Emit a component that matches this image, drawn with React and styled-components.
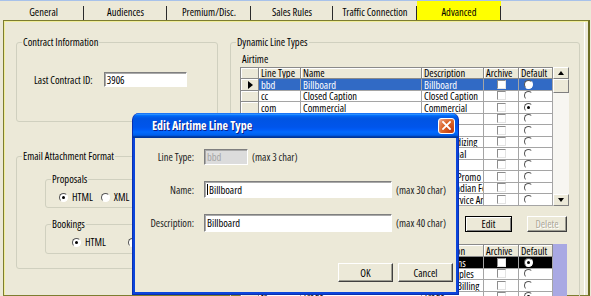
import React from "react"
import styled, { createGlobalStyle } from "styled-components"

const GlobalStyle = createGlobalStyle`
  html, body { margin: 0; padding: 0; background: #ece9d8; }
  body {
    font-family: "Open Sans", "Liberation Sans", Arial, sans-serif;
    font-stretch: 75%;
    font-size: 10.5px;
    color: #000;
  }
  * { box-sizing: border-box; }
`

const tabs = [
  { label: "General", w: 81 },
  { label: "Audiences", w: 83 },
  { label: "Premium/Disc.", w: 84 },
  { label: "Sales Rules", w: 82 },
  { label: "Traffic Connection", w: 84 },
  { label: "Advanced", w: 84, active: true },
]

const airtimeRows = [
  { code: "bbd", name: "Billboard", desc: "Billboard" },
  { code: "cc", name: "Closed Caption", desc: "Closed Caption" },
  { code: "com", name: "Commercial", desc: "Commercial", def: true },
  { code: "dir", name: "Direct Response", desc: "Direct" },
  { code: "fil", name: "Filler", desc: "Filler" },
  { code: "mer", name: "Merchandizing", desc: "Merchandizing" },
  { code: "edu", name: "Educational", desc: "Educational" },
  { code: "oth", name: "Other", desc: "Other" },
  { code: "pro", name: "Network Promo", desc: "Network Promo" },
  { code: "ncf", name: "Non-Canadian Feed", desc: "Non-Canadian Feed" },
  { code: "psa", name: "Public Service Announcement", desc: "Public Service Announcement" },
]

const otherRows = [
  { code: "prm", name: "Promotions", desc: "Promotions", def: true },
  { code: "tap", name: "Tape Samples", desc: "Tape Samples" },
  { code: "nb", name: "Network Billing", desc: "Network Billing" },
  { code: "tr", name: "Trade", desc: "Trade", def: true },
]

// little classic controls
const CheckBox = () => <Check />
const Radio = ({ checked }) => <RadioDot>{checked && <Dot />}</RadioDot>

const Grid = ({ rows, selected, header = "Description" }) => (
  <Table>
    <colgroup>
      <col style={{ width: 18 }} />
      <col style={{ width: 42 }} />
      <col style={{ width: 121 }} />
      <col style={{ width: 62 }} />
      <col style={{ width: 35 }} />
      <col style={{ width: 34 }} />
    </colgroup>
    <thead>
      <Row $h={selected === "black" ? 12 : 11}>
        <Th />
        <Th>Line Type</Th>
        <Th>Name</Th>
        <Th>{header}</Th>
        <Th>Archive</Th>
        <Th>Default</Th>
      </Row>
    </thead>
    <tbody>
      {rows.map((r, i) => {
        const sel = i === 0 && selected
        return (
          // rows alternate 12/11px so the grid keeps its ~11.6px pitch
          <Row key={r.code} $h={i % 2 === 0 ? 12 : 11}>
            <Indicator>{sel === "blue" && <Pointer />}</Indicator>
            <Td $sel={sel}>{r.code}</Td>
            <Td $sel={sel}>{r.name}</Td>
            <Td $sel={sel}>{r.desc}</Td>
            <Td $sel={sel} $center><CheckBox /></Td>
            <Td $sel={sel} $radio><Radio checked={r.def || sel === "black"} /></Td>
          </Row>
        )
      })}
    </tbody>
  </Table>
)

const App = () => {
  return (
    <>
      <GlobalStyle />
      <Screen>
        <TabStrip>
          {tabs.map((t) => (
            <Tab key={t.label} $w={t.w} $active={t.active}>{t.label}</Tab>
          ))}
        </TabStrip>

        <TabPage>
          <LeftColumn>
            <GroupBox $h={86}>
              <legend>Contract Information</legend>
              <ContractRow>
                <span>Last Contract ID:</span>
                <TextBox $w={83} $h={15}>3906</TextBox>
              </ContractRow>
            </GroupBox>

            <GroupBox $h={119} $mt={28}>
              <legend>Email Attachment Format</legend>
              <EmailInner>
                <GroupBox $h={35} $w={150}>
                  <legend>Proposals</legend>
                  <RadioRow $pl={13} $gap={8}>
                    <Option><Radio checked />HTML</Option>
                    <Option><Radio />XML</Option>
                  </RadioRow>
                </GroupBox>
                <GroupBox $h={36} $w={150} $mt={10}>
                  <legend>Bookings</legend>
                  <RadioRow $pl={26} $gap={22}>
                    <Option><Radio checked />HTML</Option>
                    <Option><Radio />XML</Option>
                  </RadioRow>
                </GroupBox>
              </EmailInner>
            </GroupBox>
          </LeftColumn>

          <GroupBox $h={280} $w={350}>
            <legend>Dynamic Line Types</legend>
            <DynInner>
              <Caption>Airtime</Caption>
              <GridWrap>
                <Grid rows={airtimeRows} selected="blue" />
                <ScrollBar>
                  <ScrollButton><ArrowUp /></ScrollButton>
                  <Thumb />
                  <Track />
                  <ScrollButton><ArrowDown /></ScrollButton>
                </ScrollBar>
              </GridWrap>
              <ButtonRow>
                <WinButton $w={47} $h={16} $default>Edit</WinButton>
                <WinButton $w={40} $h={16} $disabled>Delete</WinButton>
              </ButtonRow>
              <GridWrap $mt={12}>
                <Grid rows={otherRows} selected="black" />
                <Lavender />
              </GridWrap>
            </DynInner>
          </GroupBox>
        </TabPage>

        <Dialog>
          <TitleBar>
            <span>Edit Airtime Line Type</span>
            <CloseBox>
              <svg width="9" height="9" viewBox="0 0 9 9">
                <path d="M1 1 L8 8 M8 1 L1 8" stroke="#fff" strokeWidth="1.8" strokeLinecap="square" />
              </svg>
            </CloseBox>
          </TitleBar>
          <DialogBody>
            <Fields>
              <FieldRow $h={16}>
                <FieldLabel>Line Type:</FieldLabel>
                <TextBox $w={44} $disabled>bbd</TextBox>
                <Hint>(max 3 char)</Hint>
              </FieldRow>
              <FieldRow $h={17}>
                <FieldLabel>Name:</FieldLabel>
                <TextBox $w={188}><Caret />Billboard</TextBox>
                <Hint>(max 30 char)</Hint>
              </FieldRow>
              <FieldRow $h={18}>
                <FieldLabel>Description:</FieldLabel>
                <TextBox $w={188}>Billboard</TextBox>
                <Hint>(max 40 char)</Hint>
              </FieldRow>
            </Fields>
            <DialogButtons>
              <WinButton $w={55} $h={19}>OK</WinButton>
              <WinButton $w={55} $h={19}>Cancel</WinButton>
            </DialogButtons>
          </DialogBody>
        </Dialog>
      </Screen>
    </>
  )
}

// styles

const Screen = styled.div`
  position: relative;
  width: 591px;
  height: 296px;
  overflow: hidden;
  background: #ece9d8;
  white-space: nowrap;
`

const TabStrip = styled.div`
  display: flex;
  height: 20px;
  padding-left: 3px;
  border-top: 1px solid #a8c2ea;
`

const Tab = styled.div`
  position: relative;
  width: ${(p) => p.$w}px;
  height: 19px;
  display: flex;
  align-items: center;
  justify-content: center;
  padding-top: 2px;
  background: ${(p) => (p.$active ? "#ffff00" : "transparent")};
  &::after {
    content: "";
    position: absolute;
    right: 0;
    top: 5px;
    bottom: 0;
    width: 1px;
    background: #2a2a2a;
  }
`

const TabPage = styled.div`
  margin-left: 3px;
  width: 587px;
  height: 276px;
  border: 1px solid #7d7d30;
  border-right: 2px solid #6c6c22;
  box-shadow: inset 1px 1px 0 #f1ee9a, inset -3px 0 0 #ece9d8, inset -4px 0 0 #fff;
  display: grid;
  grid-template-columns: 202px 350px;
  column-gap: 12px;
  align-items: start;
  padding: 15px 0 0 12px;
`

const LeftColumn = styled.div`
  display: flex;
  flex-direction: column;
`

const GroupBox = styled.fieldset`
  margin: ${(p) => p.$mt || 0}px 0 0 0;
  padding: 0;
  min-width: 0;
  width: ${(p) => (p.$w ? `${p.$w}px` : "auto")};
  height: ${(p) => p.$h}px;
  border: 1px solid #d0d0bf;
  border-radius: 3px;
  legend {
    margin-left: 5px;
    padding: 0 1px;
    line-height: 13px;
  }
`

const ContractRow = styled.div`
  display: flex;
  align-items: center;
  gap: 11px;
  padding: 23px 0 0 17px;
`

const EmailInner = styled.div`
  padding: 10px 0 0 28px;
`

const RadioRow = styled.div`
  display: flex;
  align-items: center;
  gap: ${(p) => p.$gap}px;
  padding: 4px 0 0 ${(p) => p.$pl}px;
`

const Option = styled.label`
  display: flex;
  align-items: center;
  gap: 4px;
`

const DynInner = styled.div`
  padding: 4px 0 0 9px;
`

const Caption = styled.div`
  margin-left: 2px;
  line-height: 13px;
`

const GridWrap = styled.div`
  display: flex;
  align-items: stretch;
  margin-top: ${(p) => p.$mt || 1}px;
`

const Table = styled.table`
  width: 312px;
  table-layout: fixed;
  border-collapse: collapse;
  border: 1px solid #7a7a7a;
  background: #fff;
`

const Row = styled.tr`
  height: ${(p) => p.$h}px;
`

const Th = styled.th`
  padding: 0 2px;
  background: #ece9d8;
  border: 1px solid #8a8a8a;
  box-shadow: inset 1px 1px 0 #fff;
  font-weight: normal;
  text-align: left;
  line-height: 10px;
  overflow: hidden;
`

const Td = styled.td`
  padding: 0 2px;
  border: 1px solid #a5a5a5;
  line-height: 10px;
  overflow: hidden;
  text-align: ${(p) => (p.$center ? "center" : "left")};
  padding-left: ${(p) => (p.$radio ? 5 : 2)}px;
  background: ${(p) => (p.$sel === "blue" ? "#316ac5" : p.$sel === "black" ? "#000" : "#fff")};
  color: ${(p) => (p.$sel ? "#fff" : "#000")};
`

const Indicator = styled.td`
  padding: 0 0 0 7px;
  background: #ece9d8;
  border: 1px solid #8a8a8a;
  box-shadow: inset 1px 1px 0 #fff;
  line-height: 8px;
`

const Pointer = styled.span`
  display: inline-block;
  width: 0;
  height: 0;
  border-left: 5px solid #000;
  border-top: 4px solid transparent;
  border-bottom: 4px solid transparent;
  vertical-align: middle;
`

const Check = styled.span`
  display: inline-block;
  width: 9px;
  height: 9px;
  background: #fff;
  border: 1px solid;
  border-color: #8d8d8d #e4e4e4 #e4e4e4 #8d8d8d;
  vertical-align: top;
`

const RadioDot = styled.span`
  display: inline-flex;
  align-items: center;
  justify-content: center;
  width: 9px;
  height: 9px;
  border-radius: 50%;
  background: #fff;
  border: 1px solid;
  border-color: #555 #fff #fff #555;
  vertical-align: top;
  flex-shrink: 0;
`

const Dot = styled.span`
  width: 3px;
  height: 3px;
  border-radius: 50%;
  background: #000;
`

const ScrollBar = styled.div`
  width: 16px;
  display: flex;
  flex-direction: column;
  background: #f7f6f1;
`

const ScrollButton = styled.div`
  height: 12px;
  display: flex;
  align-items: center;
  justify-content: center;
  background: #ece9d8;
  border: 1px solid;
  border-color: #fff #7f7f7f #7f7f7f #fff;
`

const ArrowUp = styled.span`
  width: 0;
  height: 0;
  border-left: 3.5px solid transparent;
  border-right: 3.5px solid transparent;
  border-bottom: 4px solid #000;
`

const ArrowDown = styled(ArrowUp)`
  border-bottom: none;
  border-top: 4px solid #000;
`

const Thumb = styled(ScrollButton)`
  height: 14px;
`

const Track = styled.div`
  flex: 1;
`

const Lavender = styled.div`
  width: 14px;
  background: #a9a9e3;
`

const ButtonRow = styled.div`
  display: flex;
  justify-content: flex-end;
  gap: 15px;
  width: 328px;
  padding-right: 1px;
  margin-top: 10px;
`

const WinButton = styled.button`
  width: ${(p) => p.$w}px;
  height: ${(p) => p.$h}px;
  padding: 0;
  font: inherit;
  background: #ece9d8;
  color: ${(p) => (p.$disabled ? "#aca899" : "#000")};
  text-shadow: ${(p) => (p.$disabled ? "1px 1px 0 #fff" : "none")};
  border: 1px solid;
  border-color: ${(p) => (p.$default ? "#000" : "#fff #404040 #404040 #fff")};
  box-shadow: ${(p) =>
    p.$default
      ? "inset 1px 1px 0 #fff, inset -1px -1px 0 #808080"
      : "inset -1px -1px 0 #9d9d92"};
`

const TextBox = styled.div`
  display: flex;
  align-items: center;
  width: ${(p) => p.$w}px;
  height: ${(p) => (p.$h ? `${p.$h}px` : "100%")};
  padding-left: 2px;
  background: ${(p) => (p.$disabled ? "#dcdcdc" : "#fff")};
  color: ${(p) => (p.$disabled ? "#a5a5a5" : "#000")};
  border: 1px solid;
  border-color: #7f7f7f #fff #fff #7f7f7f;
  box-shadow: inset 1px 1px 0 #a9a9a9;
`

const Caret = styled.span`
  width: 1px;
  height: 11px;
  margin-right: 1px;
  background: #000;
`

const Dialog = styled.div`
  position: absolute;
  left: 132px;
  top: 113px;
  width: 327px;
  height: 182px;
  display: flex;
  flex-direction: column;
  background: #0b45dc;
  border: 1px solid #0a2fb0;
  border-top: none;
  border-radius: 7px 7px 0 0;
`

const TitleBar = styled.div`
  height: 25px;
  display: flex;
  align-items: center;
  justify-content: space-between;
  padding: 0 3px 0 19px;
  border-radius: 7px 7px 0 0;
  background: linear-gradient(180deg, #0058ee 0%, #3593ff 4%, #288eff 6%, #127dff 8%, #036ffc 10%, #0262ee 14%, #0057e5 20%, #0054e3 24%, #0055eb 56%, #005bf5 66%, #026afe 76%, #0062ef 86%, #0052d6 92%, #0040ab 94%, #003092 100%);
  color: #fff;
  font-weight: bold;
  font-size: 12px;
  text-shadow: 1px 1px 0 #0a1e8a;
`

const CloseBox = styled.div`
  width: 17px;
  height: 16px;
  display: flex;
  align-items: center;
  justify-content: center;
  border: 1px solid #fff;
  border-radius: 3px;
  background: radial-gradient(circle at 85% 85%, #c23c12 0%, #dc6527 55%, #e58a62 80%, #f6c4ae 100%);
`

const DialogBody = styled.div`
  flex: 1;
  margin: 0 2px 2px 2px;
  background: #ece9d8;
  padding: 11px 3px 0 0;
  display: flex;
  flex-direction: column;
`

const Fields = styled.div`
  display: flex;
  flex-direction: column;
  gap: 16px;
`

const FieldRow = styled.div`
  display: flex;
  align-items: center;
  height: ${(p) => p.$h}px;
`

const FieldLabel = styled.span`
  width: 59px;
  margin-right: 10px;
  text-align: right;
  color: #222;
`

const Hint = styled.span`
  margin-left: 4px;
  color: #222;
`

const DialogButtons = styled.div`
  display: flex;
  justify-content: flex-end;
  gap: 5px;
  margin-top: 31px;
`

export default App
